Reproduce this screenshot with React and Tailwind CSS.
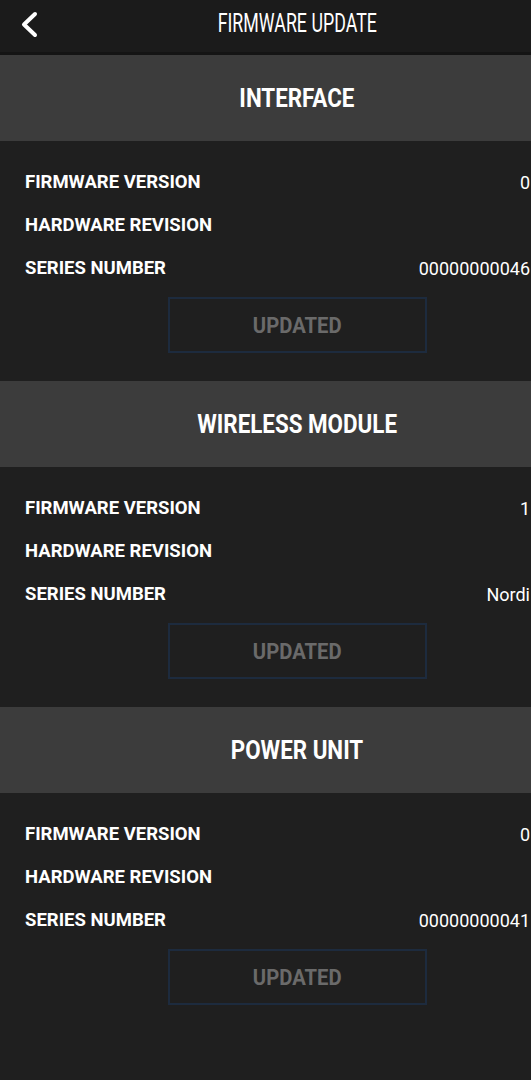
const sections = [
  {
    title: "INTERFACE",
    rows: [
      ["FIRMWARE VERSION", "0"],
      ["HARDWARE REVISION", ""],
      ["SERIES NUMBER", "00000000046"],
    ],
  },
  {
    title: "WIRELESS MODULE",
    rows: [
      ["FIRMWARE VERSION", "1"],
      ["HARDWARE REVISION", ""],
      ["SERIES NUMBER", "Nordi"],
    ],
  },
  {
    title: "POWER UNIT",
    rows: [
      ["FIRMWARE VERSION", "0"],
      ["HARDWARE REVISION", ""],
      ["SERIES NUMBER", "00000000041"],
    ],
  },
];

const font = { fontFamily: "Roboto, 'Liberation Sans', sans-serif" };

const Section = ({ title, rows }) => (
  <div>
    <div className="h-[86px] bg-[#3c3c3c] flex items-center justify-center">
      <span className="text-[26px] font-bold text-white inline-block scale-x-[0.86]">{title}</span>
    </div>
    <div className="w-[531px] pl-[25px] pr-[1px] pt-[20px]">
      {rows.map(([label, value]) => (
        <div key={label} className="h-[43px] flex items-center justify-between">
          <span className="text-[18.5px] font-bold text-white">{label}</span>
          <span className="text-[18px] text-white">{value}</span>
        </div>
      ))}
    </div>
    <div className="flex justify-center pt-[7px] pb-[28px]">
      <div className="w-[259px] h-[56px] border-2 border-[#1d2b3e] flex items-center justify-center">
        <span className="text-[22px] font-bold text-[#6a6a6a] inline-block scale-x-[0.92]">UPDATED</span>
      </div>
    </div>
  </div>
);

export default function App() {
  return (
    <div className="w-[531px] min-h-[1080px] bg-[#1f1f1f] overflow-hidden" style={font}>
      <div className="w-[594px]">
        <div className="h-[52px] bg-[#1b1b1b] flex items-center justify-center relative">
          <svg className="absolute left-[18px] top-[11px]" width="24" height="27" viewBox="0 0 24 27">
            <path d="M17 3 L6 13.5 L17 24" fill="none" stroke="white" strokeWidth="4" strokeLinecap="round" strokeLinejoin="round" />
          </svg>
          <span className="text-[26px] leading-none text-white inline-block scale-x-[0.685] -mt-[6px]">FIRMWARE UPDATE</span>
        </div>
        <div className="h-[3px] bg-[#141414]" />
        {sections.map((s) => (
          <Section key={s.title} {...s} />
        ))}
      </div>
    </div>
  );
}
